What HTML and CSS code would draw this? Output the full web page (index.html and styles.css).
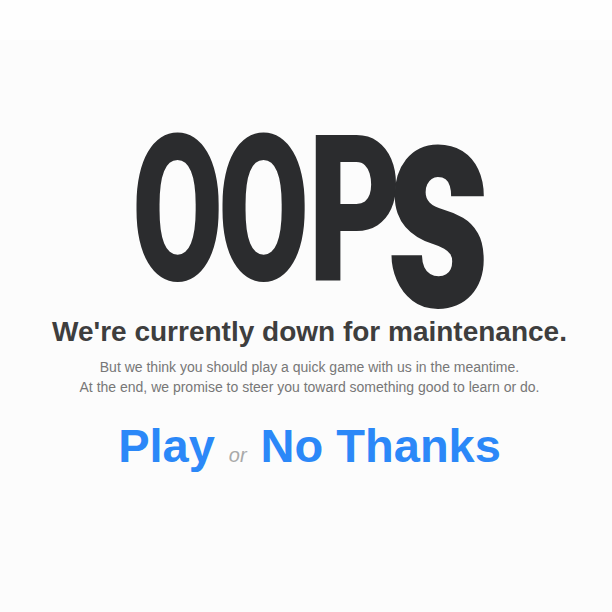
FILE: index.html
```html
<!DOCTYPE html>
<html>
<head>
<meta charset="utf-8">
<link rel="stylesheet" href="styles.css">
</head>
<body>
<div class="topband"></div>
<main class="page">
  <div class="logo" aria-label="OOPs">
    <span class="ch ch-o"><span class="glyph">O</span></span><span class="ch ch-o"><span class="glyph">O</span></span><span class="ch ch-p"><span class="glyph">P</span></span><span class="ch ch-s"><span class="glyph">s</span></span>
  </div>
  <h1 class="title">We're currently down for maintenance.</h1>
  <p class="sub">But we think you should play a quick game with us in the meantime.<br>At the end, we promise to steer you toward something good to learn or do.</p>
  <div class="actions">
    <a class="act" href="#">Play</a>
    <span class="or">or</span>
    <a class="act" href="#">No Thanks</a>
  </div>
</main>
</body>
</html>
```
FILE: styles.css
```css
html, body {
  margin: 0;
  padding: 0;
  background: #fcfcfc;
}
body {
  font-family: "Liberation Sans", Arial, Helvetica, sans-serif;
}
.topband {
  height: 40px;
  background: #fefefe;
}
.page {
  display: flex;
  flex-direction: column;
  align-items: center;
  padding: 68px 0 0 7px;
}
.logo {
  display: flex;
  align-items: flex-start;
  height: 208px;
  margin-left: -3px;
  font-family: Roboto, "Liberation Sans", sans-serif;
  font-weight: 900;
  color: #2b2c2e;
  line-height: 1;
}
.ch {
  display: block;
  overflow: visible;
  white-space: nowrap;
}
.ch .glyph {
  display: inline-block;
  transform-origin: 0 0;
}
.ch-o { width: 86px; font-size: 205px; }
.ch-o .glyph { transform: scaleX(0.645); }
.ch-p { width: 80px; font-size: 205px; margin-left: 4px; }
.ch-p .glyph { transform: scaleX(0.7); }
.ch-s { width: 96px; font-size: 300px; line-height: 0.55; margin-top: 13px; }
.ch-s .glyph { transform: scaleX(0.662); }
.title {
  margin: 0;
  font-size: 28px;
  font-weight: bold;
  color: #3e3e3e;
  line-height: 32px;
}
.sub {
  margin: 9px 0 0;
  font-size: 14px;
  line-height: 20px;
  color: #777;
  text-align: center;
}
.actions {
  display: flex;
  align-items: baseline;
  gap: 14px;
  margin-top: 21px;
}
.act {
  font-size: 47px;
  font-weight: bold;
  color: #2b88f8;
  text-decoration: none;
  line-height: 56px;
}
.or {
  font-size: 20px;
  font-style: italic;
  color: #a9a9a9;
}
```
